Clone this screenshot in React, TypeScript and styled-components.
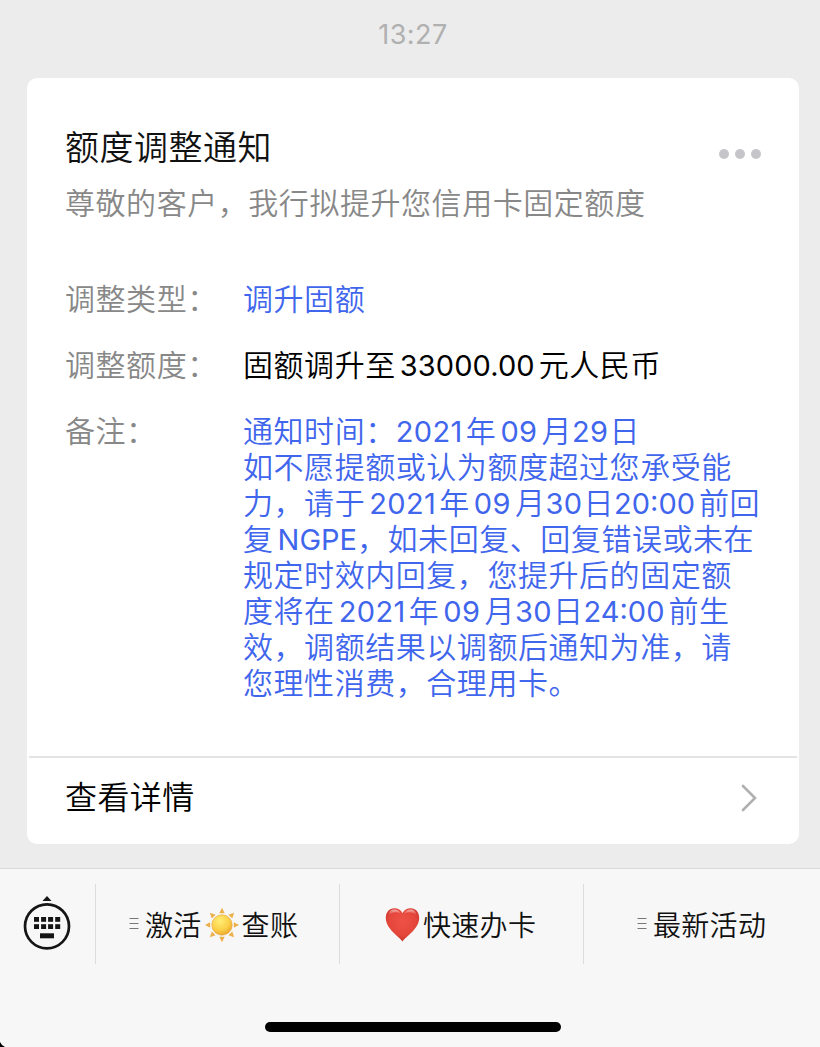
import React from "react";
import styled, { createGlobalStyle } from "styled-components";

const Global = createGlobalStyle`
  * { box-sizing: border-box; }
  body { margin: 0; background: #ececec; }
`;

const Screen = styled.div`
  display: flex;
  flex-direction: column;
  width: 820px;
  height: 1047px;
  overflow: hidden;
  background: #ececec;
  font-family: "Noto Sans CJK SC", sans-serif;
  font-weight: 350;
  color: #111;
`;

const Time = styled.time`
  height: 78px;
  padding-top: 17px;
  padding-left: 6px;
  text-align: center;
  font: 400 27px/35px Inter, sans-serif;
  letter-spacing: 0.5px;
  color: #b0b0b0;
`;

const Card = styled.article`
  display: flex;
  flex-direction: column;
  width: 772px;
  height: 766px;
  margin-left: 27px;
  border-radius: 10px;
  background: #fff;
`;

const CardBody = styled.div`
  height: 678px;
  padding: 44px 0 0 38px;
`;

const Header = styled.header`
  display: flex;
  justify-content: space-between;
  height: 61px;
  padding-right: 38px;
`;

const Title = styled.h1`
  margin: 0;
  font-size: 34px;
  font-weight: 350;
  line-height: 48px;
  letter-spacing: 0.5px;
`;

const Dots = styled.div`
  display: flex;
  gap: 6px;
  padding-top: 27px;
`;

const Dot = styled.i`
  width: 10px;
  height: 10px;
  border-radius: 50%;
  background: #c6c6ca;
`;

const Subtitle = styled.p`
  margin: 0 0 60px;
  font-size: 30px;
  line-height: 36px;
  letter-spacing: 0.55px;
  color: #888;
`;

const Fields = styled.dl`
  display: flex;
  flex-direction: column;
  gap: 30px;
  margin: 0;
  font-size: 30px;
  line-height: 36px;
  letter-spacing: 0.55px;
`;

const Field = styled.div`
  display: grid;
  grid-template-columns: 178px 1fr;
`;

const Label = styled.dt`
  color: #888;
`;

const Value = styled.dd<{ $color: string }>`
  margin: 0;
  white-space: nowrap;
  color: ${(p) => p.$color};
`;

const Line = styled.div``;

const Num = styled.span<{ $l?: number; $r?: number; $s?: number }>`
  margin-left: ${(p) => p.$l ?? 0}px;
  margin-right: ${(p) => p.$r ?? 0}px;
  font-family: Inter, sans-serif;
  font-size: 29px;
  font-weight: 400;
  line-height: 1;
  letter-spacing: ${(p) => p.$s ?? 0.4}px;
`;

const CardFooter = styled.footer`
  display: flex;
  align-items: center;
  justify-content: space-between;
  height: 88px;
  margin: 0 2px;
  padding: 0 39px 13px 36px;
  border-top: 2px solid #e3e3e3;
  font-size: 32px;
  letter-spacing: 0.4px;
  color: #000;
`;

const Chevron = styled.svg`
  width: 18px;
  height: 28px;
  margin-top: 7px;
`;

const BottomBar = styled.nav`
  display: flex;
  flex-direction: column;
  justify-content: space-between;
  height: 179px;
  margin-top: 24px;
  padding-top: 15px;
  border-top: 1px solid #dadada;
  background: #f7f7f7;
`;

const Menu = styled.div`
  display: grid;
  grid-template-columns: 95px 244px 244px 237px;
  height: 80px;
`;

const KeyboardButton = styled.div`
  padding: 11px 0 0 22px;
`;

const MenuItem = styled.div<{ $pad: number }>`
  display: flex;
  align-items: center;
  padding-left: ${(p) => p.$pad}px;
  border-left: 1px solid #dcdcdc;
  font-size: 28px;
  letter-spacing: 0.3px;
  white-space: nowrap;
`;

const MenuMark = styled.svg`
  width: 10px;
  height: 12px;
  margin-right: 6px;
`;

const Emoji = styled.svg<{ $w: number }>`
  flex: none;
  width: ${(p) => p.$w}px;
  height: 36px;
  margin: 1px 3px 0;
`;

const HomeRow = styled.div`
  display: flex;
  align-items: flex-end;
  height: 25px;
`;

const Corner = styled.svg`
  width: 5px;
  height: 5px;
`;

const HomeIndicator = styled.div`
  width: 296px;
  height: 10px;
  margin: 0 0 15px 260px;
  border-radius: 5px;
  background: #000;
`;

const BLUE = "#3f66ec";

const Keyboard = () => (
  <svg width="50" height="56" viewBox="0 0 50 56">
    <path d="M20.5 6 L25 1 L29.5 6Z" fill="#151515" />
    <circle cx="25" cy="31.3" r="22" fill="none" stroke="#151515" strokeWidth="2.7" />
    {[22, 29.2].map((y) =>
      [12, 19.1, 26.1, 33.2].map((x) => (
        <rect key={`${x}-${y}`} x={x} y={y} width="5" height="4.8" fill="#151515" />
      ))
    )}
    <rect x="18" y="38.3" width="14" height="5" fill="#151515" />
  </svg>
);

const Mark = () => (
  <MenuMark viewBox="0 0 10 12">
    <path d="M0.5 0.5H9.5M0.5 5.5H9.5M0.5 10.5H9.5" stroke="#777" strokeWidth="1" />
  </MenuMark>
);

const Sun = () => (
  <Emoji $w={34} viewBox="0 0 34 36">
    <defs>
      <radialGradient id="sun" cx="0.4" cy="0.3" r="0.75">
        <stop offset="0" stopColor="#ffed75" />
        <stop offset="0.6" stopColor="#fbd048" />
        <stop offset="1" stopColor="#e9a22b" />
      </radialGradient>
    </defs>
    {[0, 45, 90, 135, 180, 225, 270, 315].map((a) => (
      <path key={a} d="M14.3 6.2 L17 0.8 L19.7 6.2Z" fill="#ecb04a" transform={`rotate(${a} 17 18)`} />
    ))}
    <circle cx="17" cy="18" r="10.2" fill="url(#sun)" stroke="#e5a238" strokeWidth="0.6" />
  </Emoji>
);

const Heart = () => (
  <Emoji $w={35} viewBox="0 0 35 36">
    <defs>
      <radialGradient id="heart" cx="0.5" cy="0.4" r="0.62">
        <stop offset="0" stopColor="#ee5246" />
        <stop offset="0.65" stopColor="#e5463b" />
        <stop offset="1" stopColor="#c5352c" />
      </radialGradient>
      <linearGradient id="shine" x1="0" y1="0" x2="0" y2="1">
        <stop offset="0" stopColor="#fff" stopOpacity="0.55" />
        <stop offset="1" stopColor="#fff" stopOpacity="0" />
      </linearGradient>
    </defs>
    <path d="M17.5 34.5C14 29.5 0.8 22 0.8 10.8C0.8 5 4.6 1.3 9.2 1.3C13 1.3 16 3.2 17.5 6.2C19 3.2 22 1.3 25.8 1.3C30.4 1.3 34.2 5 34.2 10.8C34.2 22 21 29.5 17.5 34.5Z" fill="url(#heart)" />
    <path d="M3.5 8C4 4.5 6.4 2.5 9.3 2.5C12.2 2.5 14.5 4 15.5 6.5C11.8 4.4 7.2 4.6 3.5 8ZM31.5 8C31 4.5 28.6 2.5 25.7 2.5C22.8 2.5 20.5 4 19.5 6.5C23.2 4.4 27.8 4.6 31.5 8Z" fill="url(#shine)" />
  </Emoji>
);

export default function App() {
  return (
    <Screen>
      <Global />
      <Time>13:27</Time>
      <Card>
        <CardBody>
          <Header>
            <Title>额度调整通知</Title>
            <Dots>
              <Dot />
              <Dot />
              <Dot />
            </Dots>
          </Header>
          <Subtitle>尊敬的客户，我行拟提升您信用卡固定额度</Subtitle>
          <Fields>
            <Field>
              <Label>调整类型：</Label>
              <Value $color={BLUE}>调升固额</Value>
            </Field>
            <Field>
              <Label>调整额度：</Label>
              <Value $color="#000">
                固额调升至<Num $l={4} $r={4} $s={0.1}>33000.00</Num>元人民币
              </Value>
            </Field>
            <Field>
              <Label>备注：</Label>
              <Value $color={BLUE}>
                <Line>通知时间：<Num $r={3}>2021</Num>年<Num $l={4} $r={4}>09</Num>月<Num $r={1}>29</Num>日</Line>
                <Line>如不愿提额或认为额度超过您承受能</Line>
                <Line>力，请于<Num $l={4} $r={3}>2021</Num>年<Num $l={4} $r={4}>09</Num>月<Num $r={1}>30</Num>日<Num $r={4} $s={0}>20:00</Num>前回</Line>
                <Line>复<Num $l={4} $s={0}>NGPE</Num>，如未回复、回复错误或未在</Line>
                <Line>规定时效内回复，您提升后的固定额</Line>
                <Line>度将在<Num $l={4} $r={3}>2021</Num>年<Num $l={4} $r={4}>09</Num>月<Num $r={1}>30</Num>日<Num $r={4} $s={0}>24:00</Num>前生</Line>
                <Line>效，调额结果以调额后通知为准，请</Line>
                <Line>您理性消费，合理用卡。</Line>
              </Value>
            </Field>
          </Fields>
        </CardBody>
        <CardFooter>
          查看详情
          <Chevron viewBox="0 0 18 28">
            <path d="M3 2 L15 14 L3 26" fill="none" stroke="#b0b0b0" strokeWidth="2.6" strokeLinecap="round" />
          </Chevron>
        </CardFooter>
      </Card>
      <BottomBar>
        <Menu>
          <KeyboardButton>
            <Keyboard />
          </KeyboardButton>
          <MenuItem $pad={33}>
            <Mark />激活<Sun />查账
          </MenuItem>
          <MenuItem $pad={42}>
            <Heart />快速办卡
          </MenuItem>
          <MenuItem $pad={53}>
            <Mark />最新活动
          </MenuItem>
        </Menu>
        <HomeRow>
          <Corner viewBox="0 0 5 5">
            <path d="M0 0 Q1.5 3.5 5 5 H0Z" fill="#000" />
          </Corner>
          <HomeIndicator />
        </HomeRow>
      </BottomBar>
    </Screen>
  );
}
